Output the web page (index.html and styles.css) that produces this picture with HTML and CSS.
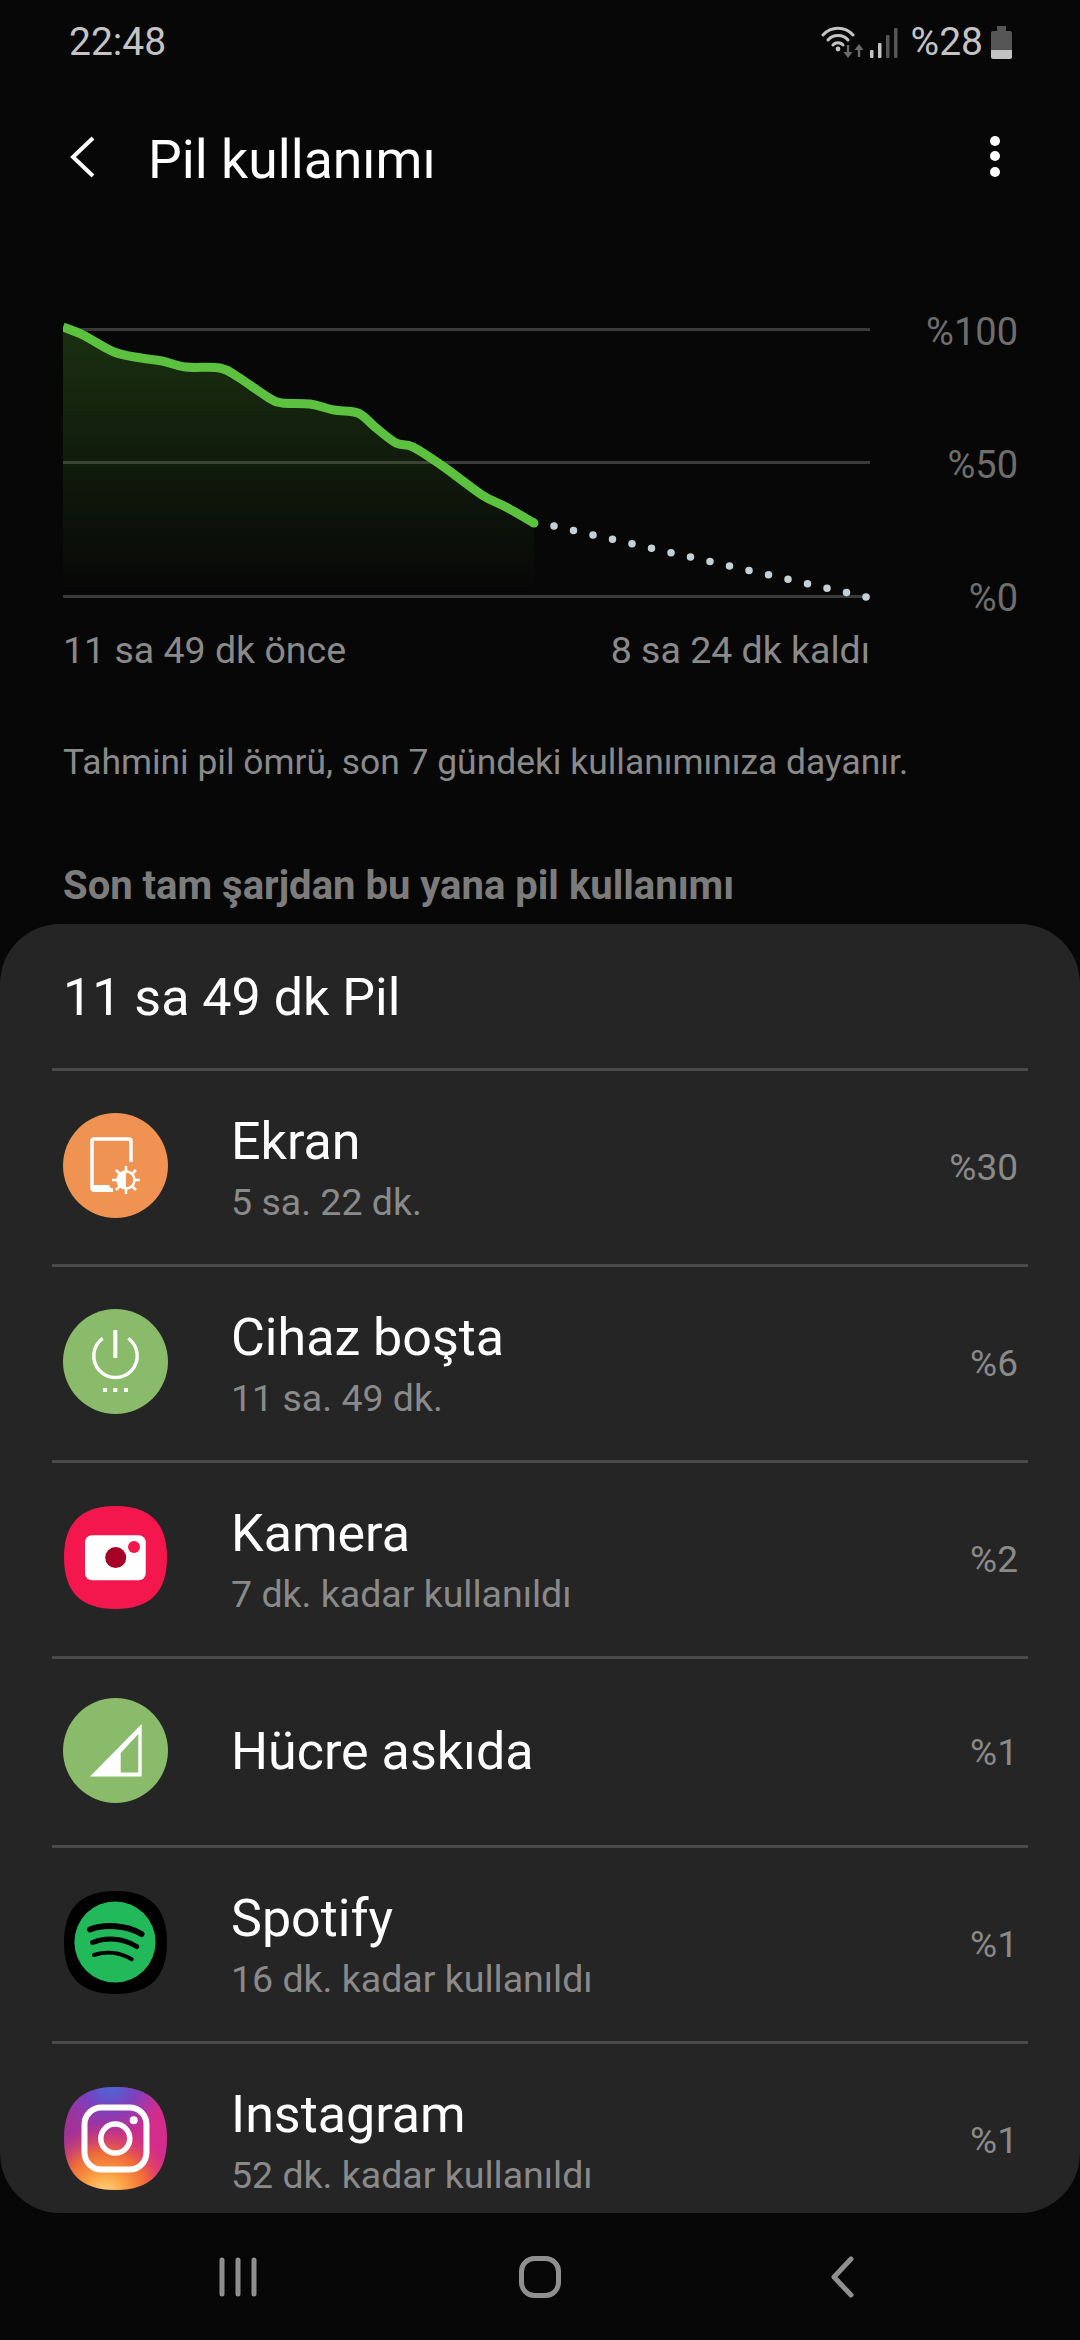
FILE: index.html
```html
<!DOCTYPE html>
<html lang="tr">
<head>
    <meta charset="UTF-8">
    <meta name="viewport" content="width=device-width, initial-scale=1.0">
    <title>Pil kullanımı</title>
    <link rel="stylesheet" href="styles.css">
</head>
<body>

    <!-- Durum çubuğu -->
    <div class="status">
        <span>22:48</span>
        <div class="status-right">
            <svg class="wifi" width="44" height="34" viewBox="0 0 44 34">
                <g fill="none" stroke="#c4c4c4" stroke-width="3" stroke-linecap="round">
                    <path d="M2 10C10 1 24 1 32 10"/>
                    <path d="M7 15C12 9 22 9 27 15"/>
                    <path d="M12 20C14 17 20 17 22 20"/>
                </g>
                <circle cx="17" cy="24" r="2.400" fill="#c4c4c4"/>
                <path d="M27 20v8" stroke="#6a6a6a" stroke-width="2.400"/>
                <path d="M22.500 27h9l-4.500 6z" fill="#6a6a6a"/>
                <path d="M38 32v-8" stroke="#6a6a6a" stroke-width="2.400"/>
                <path d="M33.500 25h9l-4.500-6z" fill="#6a6a6a"/>
            </svg>
            <svg class="signal" width="28" height="30" viewBox="0 0 28 30">
                <rect x="0" y="22" width="3.500" height="8" rx="1" fill="#c4c4c4"/>
                <rect x="8" y="15" width="3.500" height="15" rx="1" fill="#c4c4c4"/>
                <rect x="16" y="7" width="3.500" height="23" rx="1" fill="#555"/>
                <rect x="24" y="0" width="3.500" height="30" rx="1" fill="#555"/>
            </svg>
            <span class="level">%28</span>
            <svg class="battery" width="21" height="33" viewBox="0 0 21 33">
                <path d="M6 0h9v5h4a2 2 0 0 1 2 2v17H0V7a2 2 0 0 1 2-2h4z" fill="#555"/>
                <path d="M0 24h21v7a2 2 0 0 1-2 2H2a2 2 0 0 1-2-2z" fill="#c2c2c2"/>
            </svg>
        </div>
    </div>

    <!-- Başlık -->
    <div class="toolbar">
        <svg class="back" width="25" height="42" viewBox="0 0 25 42">
            <path d="M23 2L3 21l20 19" fill="none" stroke="#fff" stroke-width="4"/>
        </svg>
        <h1>Pil kullanımı</h1>
        <svg class="more" width="12" height="44" viewBox="0 0 12 44">
            <circle cx="6" cy="6" r="5" fill="#fff"/>
            <circle cx="6" cy="21" r="5" fill="#fff"/>
            <circle cx="6" cy="37" r="5" fill="#fff"/>
        </svg>
    </div>

    <!-- Grafik -->
    <div class="chart">
        <svg class="plot" width="810" height="290" viewBox="63 320 810 290">
            <defs>
                <linearGradient id="area" x1="0" y1="0" x2="0" y2="1">
                    <stop offset="0" stop-color="#3d7a22" stop-opacity=".36"/>
                    <stop offset="1" stop-color="#3d7a22" stop-opacity="0"/>
                </linearGradient>
            </defs>
            <g stroke="#3a3a3a" stroke-width="3">
                <line x1="63" y1="329.500" x2="870" y2="329.500"/>
                <line x1="63" y1="462.500" x2="870" y2="462.500"/>
                <line x1="63" y1="596.500" x2="870" y2="596.500"/>
            </g>
            <path fill="url(#area)" d="M63 327C66.300 328.300 74.500 330.800 83 335C91.500 339.200 104.300 348.200 114 352C123.700 355.800 133 356.500 141 358C149 359.500 154.500 359.500 162 361C169.500 362.500 176.300 365.800 186 367C195.700 368.200 211.300 366.300 220 368C228.700 369.700 229.800 372 238 377C246.200 382 261.700 393.700 269 398C276.300 402.300 275.200 402 282 403C288.800 404 301.300 402.800 310 404C318.700 405.200 326 408.500 334 410C342 411.500 351.200 410.200 358 413C364.800 415.800 368.700 422 375 427C381.300 432 389.700 439.700 396 443C402.300 446.300 405 443 413 447C421 451 432.500 459 444 467C455.500 475 471.700 488.300 482 495C492.300 501.700 497.300 502.300 506 507C514.700 511.700 529.300 520.300 534 523V592H63Z"/>
            <path fill="none" stroke="#5cc13e" stroke-width="9" stroke-linejoin="round" d="M63 327C66.300 328.300 74.500 330.800 83 335C91.500 339.200 104.300 348.200 114 352C123.700 355.800 133 356.500 141 358C149 359.500 154.500 359.500 162 361C169.500 362.500 176.300 365.800 186 367C195.700 368.200 211.300 366.300 220 368C228.700 369.700 229.800 372 238 377C246.200 382 261.700 393.700 269 398C276.300 402.300 275.200 402 282 403C288.800 404 301.300 402.800 310 404C318.700 405.200 326 408.500 334 410C342 411.500 351.200 410.200 358 413C364.800 415.800 368.700 422 375 427C381.300 432 389.700 439.700 396 443C402.300 446.300 405 443 413 447C421 451 432.500 459 444 467C455.500 475 471.700 488.300 482 495C492.300 501.700 497.300 502.300 506 507C514.700 511.700 529.300 520.300 534 523"/>
            <circle cx="534" cy="523" r="4.500" fill="#5cc13e"/>
            <line x1="554" y1="526" x2="868" y2="597.500" stroke="#c5d0d6" stroke-width="7.500" stroke-linecap="round" stroke-dasharray="0 20"/>
        </svg>
        <div class="chart-levels">
            <span>%100</span>
            <span>%50</span>
            <span>%0</span>
        </div>
    </div>
    <div class="chart-times">
        <span>11 sa 49 dk önce</span>
        <span>8 sa 24 dk kaldı</span>
    </div>

    <p class="note">Tahmini pil ömrü, son 7 gündeki kullanımınıza dayanır.</p>
    <h2>Son tam şarjdan bu yana pil kullanımı</h2>

    <!-- Liste -->
    <div class="sheet">
        <div class="sheet-title">11 sa 49 dk Pil</div>

        <div class="row">
            <svg class="icon" width="105" height="105" viewBox="0 0 105 105">
                <circle cx="52.500" cy="52.500" r="52.500" fill="#f09252"/>
                <path d="M50 77H31a2 2 0 0 1-2-2V28a2 2 0 0 1 2-2h35a2 2 0 0 1 2 2v21" fill="none" stroke="#fff" stroke-width="3.500"/>
                <path d="M29 72h17l4 7H31a2 2 0 0 1-2-2z" fill="#fff"/>
                <circle cx="63" cy="67" r="8.500" fill="none" stroke="#fff" stroke-width="2.500"/>
                <path d="M63 58a9 9 0 0 0 0 18z" fill="#fff"/>
                <g stroke="#fff" stroke-width="2.500">
                    <path d="M63 53v5M63 76v5M49 67h5M72 67h5M53 57l3.500 3.500M69.500 73.500L73 77M53 77l3.500-3.500M69.500 60.500L73 57"/>
                </g>
            </svg>
            <div class="row-text">
                <div class="row-name">Ekran</div>
                <div class="row-sub">5 sa. 22 dk.</div>
            </div>
            <span class="row-pct">%30</span>
        </div>

        <div class="row">
            <svg class="icon" width="105" height="105" viewBox="0 0 105 105">
                <circle cx="52.500" cy="52.500" r="52.500" fill="#8abb6a"/>
                <path d="M39.700 29.300A21.700 21.700 0 1 0 65.300 29.300" fill="none" stroke="#fff" stroke-width="3.400"/>
                <path d="M52.300 21v28" stroke="#fff" stroke-width="4"/>
                <g fill="#fff">
                    <rect x="40" y="79" width="4" height="4"/>
                    <rect x="50.300" y="79" width="4" height="4"/>
                    <rect x="61" y="79" width="4" height="4"/>
                </g>
            </svg>
            <div class="row-text">
                <div class="row-name">Cihaz boşta</div>
                <div class="row-sub">11 sa. 49 dk.</div>
            </div>
            <span class="row-pct">%6</span>
        </div>

        <div class="row">
            <svg class="icon" width="105" height="105" viewBox="-1 -1 105 105">
                <path d="M51.500 0C86 0 103 17 103 51.500S86 103 51.500 103 0 86 0 51.500 17 0 51.500 0z" fill="#f3174e"/>
                <rect x="21" y="29.300" width="60.700" height="45" rx="7" fill="#fff"/>
                <circle cx="51.700" cy="51.600" r="10.500" fill="#a50026"/>
                <circle cx="70" cy="41" r="6" fill="#f3174e"/>
            </svg>
            <div class="row-text">
                <div class="row-name">Kamera</div>
                <div class="row-sub">7 dk. kadar kullanıldı</div>
            </div>
            <span class="row-pct">%2</span>
        </div>

        <div class="row row-single">
            <svg class="icon" width="105" height="105" viewBox="0 0 105 105">
                <circle cx="52.500" cy="52.500" r="52.500" fill="#8abb6a"/>
                <path fill-rule="evenodd" fill="#fff" d="M78.700 26V78.400H27zM75.300 36L57.700 55V74.400H75.300z"/>
            </svg>
            <div class="row-text">
                <div class="row-name">Hücre askıda</div>
            </div>
            <span class="row-pct">%1</span>
        </div>

        <div class="row">
            <svg class="icon" width="105" height="105" viewBox="-1 -1 105 105">
                <path d="M51.500 0C86 0 103 17 103 51.500S86 103 51.500 103 0 86 0 51.500 17 0 51.500 0z" fill="#000"/>
                <circle cx="51" cy="51" r="40.600" fill="#21b95a"/>
                <g fill="none" stroke="#000" stroke-linecap="round">
                    <path d="M26 38.500C40 33 62 34 77.500 43" stroke-width="6"/>
                    <path d="M28.700 51.500C42 46 59 47 72.700 55.500" stroke-width="5"/>
                    <path d="M30 64C42 60 56 61 67.700 68.300" stroke-width="4"/>
                </g>
            </svg>
            <div class="row-text">
                <div class="row-name">Spotify</div>
                <div class="row-sub">16 dk. kadar kullanıldı</div>
            </div>
            <span class="row-pct">%1</span>
        </div>

        <div class="row">
            <svg class="icon" width="105" height="105" viewBox="-1 -1 105 105">
                <defs>
                    <clipPath id="squircle">
                        <path d="M51.500 0C86 0 103 17 103 51.500S86 103 51.500 103 0 86 0 51.500 17 0 51.500 0z"/>
                    </clipPath>
                    <linearGradient id="ig-base" x1="0.900" y1="0.300" x2="0.100" y2="0.300">
                        <stop offset="0" stop-color="#d42c8c"/>
                        <stop offset="1" stop-color="#a03397"/>
                    </linearGradient>
                    <radialGradient id="ig-top" cx="0.450" cy="-0.050" r="0.550">
                        <stop offset="0" stop-color="#3f72e0"/>
                        <stop offset="0.500" stop-color="#6d45c8" stop-opacity=".8"/>
                        <stop offset="1" stop-color="#8a3ab9" stop-opacity="0"/>
                    </radialGradient>
                    <radialGradient id="ig-bottom" cx="0.400" cy="1.050" r="0.700">
                        <stop offset="0" stop-color="#ffdc86"/>
                        <stop offset="0.300" stop-color="#fba245"/>
                        <stop offset="0.600" stop-color="#f5702f" stop-opacity=".9"/>
                        <stop offset="1" stop-color="#e0336f" stop-opacity="0"/>
                    </radialGradient>
                </defs>
                <g clip-path="url(#squircle)">
                    <rect width="103" height="103" fill="url(#ig-base)"/>
                    <rect width="103" height="103" fill="url(#ig-top)"/>
                    <rect width="103" height="103" fill="url(#ig-bottom)"/>
                </g>
                <rect x="20.500" y="20.500" width="62" height="62" rx="17" fill="none" stroke="#fff" stroke-width="6"/>
                <circle cx="51.300" cy="51.600" r="14.500" fill="none" stroke="#fff" stroke-width="5.500"/>
                <circle cx="69.700" cy="33.300" r="4" fill="#fff"/>
            </svg>
            <div class="row-text">
                <div class="row-name">Instagram</div>
                <div class="row-sub">52 dk. kadar kullanıldı</div>
            </div>
            <span class="row-pct">%1</span>
        </div>
    </div>

    <!-- Gezinme çubuğu -->
    <div class="nav">
        <svg width="38" height="40" viewBox="0 0 38 40">
            <g stroke="#8f8f8f" stroke-width="5" stroke-linecap="round">
                <path d="M3 3v34M19 3v34M35 3v34"/>
            </g>
        </svg>
        <svg width="42" height="42" viewBox="0 0 42 42">
            <rect x="2.500" y="2.500" width="37" height="37" rx="13" fill="none" stroke="#8f8f8f" stroke-width="5"/>
        </svg>
        <svg width="24" height="42" viewBox="0 0 24 42">
            <path d="M21 3L4 21l17 18" fill="none" stroke="#8f8f8f" stroke-width="5" stroke-linecap="round" stroke-linejoin="round"/>
        </svg>
    </div>

</body>
</html>
```

FILE: styles.css
```css
html, body { margin: 0; padding: 0; }
body { height: 2340px; overflow: hidden; background: #070707; font-family: Roboto, sans-serif; color: #fff; }

.status { height: 84px; padding: 0 68px 0 69px; display: flex; align-items: center; justify-content: space-between; font-size: 39px; color: #c4c4c4; }
.status-right { display: flex; align-items: center; }
.status-right svg { display: block; }
.signal { margin-left: 5px; margin-top: 2px; }
.level { margin-left: 13px; }
.battery { margin-left: 8px; }

.toolbar { height: 146px; padding: 0 79px 0 70px; display: flex; align-items: center; }
.toolbar h1 { margin: 4px 0 0 53px; font-size: 53.500px; font-weight: 400; }
.more { margin-left: auto; }

.chart { margin-top: 90px; padding-left: 63px; height: 290px; display: flex; align-items: flex-start; }
.plot { display: block; flex: none; }
.chart-levels { width: 143px; margin-top: -10px; display: flex; flex-direction: column; gap: 89px; align-items: flex-end; margin-left: auto; margin-right: 62px; font-size: 38px; line-height: 44px; color: #6e6e6e; }

.chart-times { width: 807px; margin: 18px 0 0 63px; display: flex; justify-content: space-between; font-size: 37.500px; line-height: 44px; color: #8a8a8a; }

.note { margin: 67px 0 0 63px; font-size: 35.400px; line-height: 46px; color: #8a8a8a; }
h2 { margin: 79px 0 0 63px; font-size: 40px; line-height: 44px; font-weight: 700; color: #7c7c7c; }

.sheet { margin-top: 16px; height: 1289px; padding: 0 52px; box-sizing: border-box; background: #252525; border-radius: 60px; overflow: hidden; }
.sheet-title { height: 144px; padding: 3px 0 0 11px; box-sizing: border-box; display: flex; align-items: center; font-size: 52px; }

.row { height: 196px; box-sizing: border-box; padding: 0 10px 0 11px; border-top: 3px solid #4a4a4a; display: flex; align-items: center; }
.row-single { height: 189px; }
.icon { display: block; flex: none; margin-top: -4px; }
.row-text { margin-left: 63px; padding-top: 8px; }
.row-single .row-text { padding-top: 0; }
.row-name { font-size: 52px; line-height: 60px; }
.row-sub { font-size: 37.500px; line-height: 60px; color: #8a8a8a; }
.row-pct { margin-left: auto; font-size: 37px; color: #8a8a8a; }

.nav { height: 127px; padding: 0 87px; display: grid; grid-template-columns: repeat(3, 1fr); align-items: center; justify-items: center; }
```
